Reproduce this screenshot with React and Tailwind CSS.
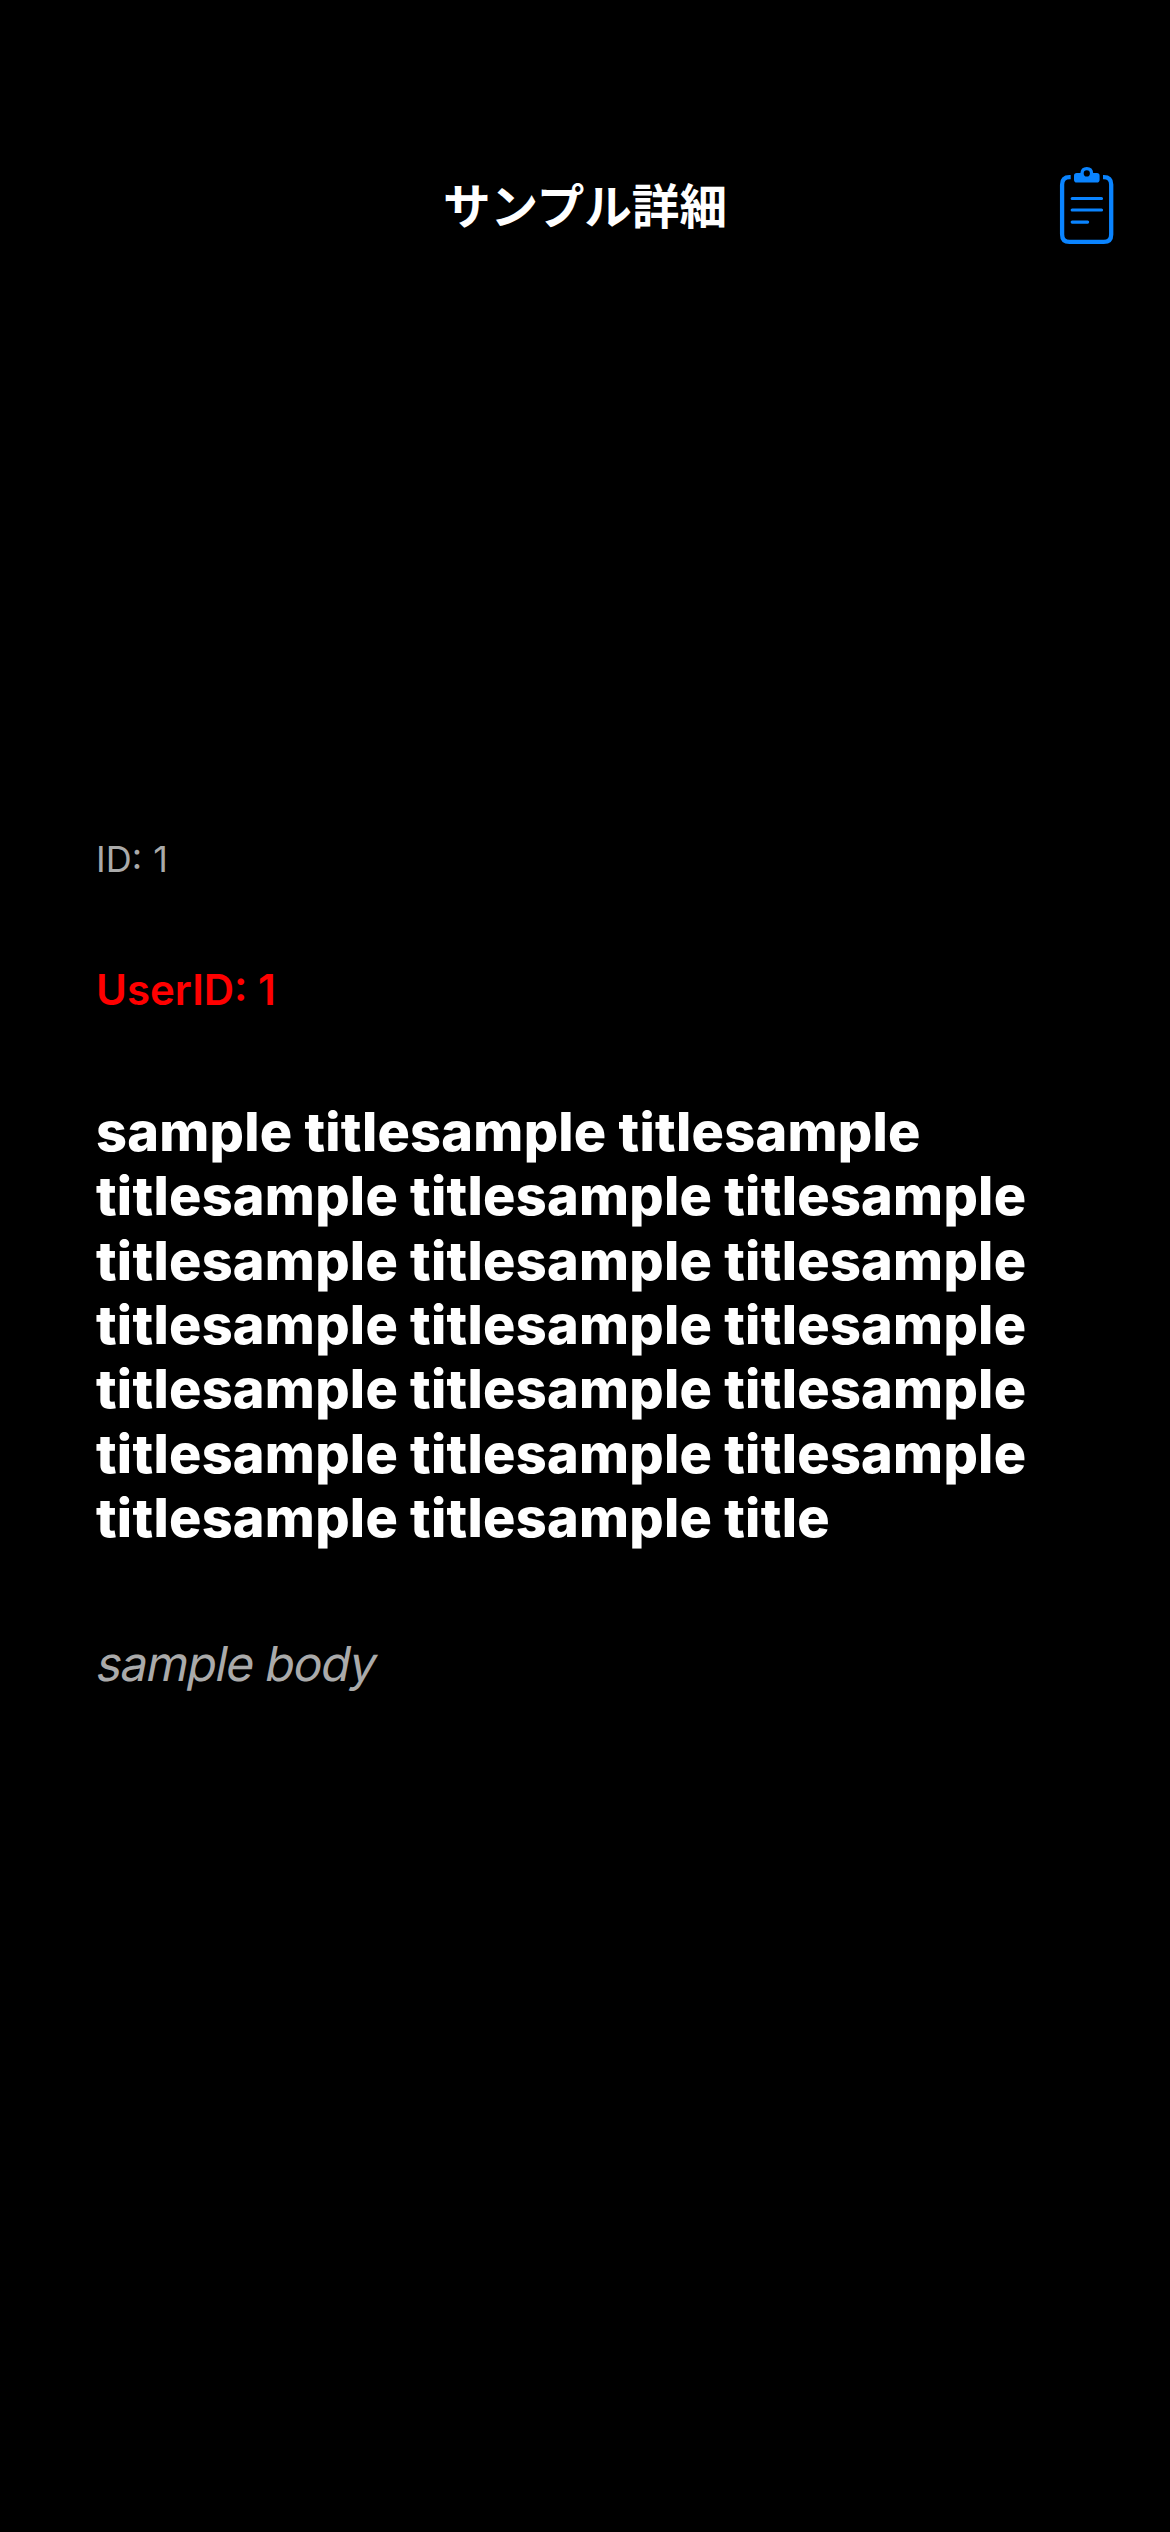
function ClipboardIcon() {
  return (
    <svg className="h-[110px] w-[100px]" viewBox="0 0 100 110" fill="none" stroke="#0a84ff">
      <path d="M30.7 27.2H29.5Q22.1 27.2 22.1 34.6V84.4Q22.1 91.8 29.5 91.8H63.8Q71.2 91.8 71.2 84.4V34.6Q71.2 27.2 63.8 27.2H63" strokeWidth="4.3" />
      <path d="M32.2 48.5H61.5M32.2 60H61.5M32.2 72.1H47.6" strokeWidth="3.2" strokeLinecap="round" />
      <path fill="#0a84ff" stroke="none" fillRule="evenodd" d="M36.8 23H40.4Q40.7 17 46.8 17Q52.9 17 53.2 23H56.8Q59.6 23 59.6 25.8V29.8Q59.6 32.6 56.8 32.6H36.8Q34 32.6 34 29.8V25.8Q34 23 36.8 23ZM46.8 20.3A3.1 3.1 0 1 0 46.8 26.5A3.1 3.1 0 1 0 46.8 20.3Z" />
    </svg>
  );
}

const TITLE_LINES = [
  "sample titlesample titlesample",
  ...Array(5).fill("titlesample titlesample titlesample"),
  "titlesample titlesample title",
];

export default function App() {
  return (
    <div className="h-[2532px] w-[1170px] overflow-hidden bg-black pt-[141px] font-['Inter','Noto_Sans_CJK_JP',sans-serif] text-white">
      <header className="grid h-[132px] grid-cols-[1fr_auto_1fr] items-center pb-[6px]">
        <span />
        <h1 className="whitespace-nowrap font-['Noto_Sans_CJK_JP',sans-serif] text-[47.6px] leading-[70px] font-bold">サンプル詳細</h1>
        <button type="button" aria-label="Clipboard" className="mr-[30px] mt-[2px] justify-self-end">
          <ClipboardIcon />
        </button>
      </header>
      <main className="flex flex-col items-start pt-[562px] pl-[96px]">
        <p className="text-[36px] leading-[48px] [word-spacing:1px] text-[#aaa]">ID: 1</p>
        <p className="mt-[80px] text-[42px] leading-[54px] font-semibold text-[#f00]">UserID: 1</p>
        <p className="mt-[83px] text-[54px] leading-[64.33px] font-extrabold tracking-[0.24px] whitespace-nowrap">
          {TITLE_LINES.map((line, i) => (
            <span key={i} className="block">{line}</span>
          ))}
        </p>
        <p className="mt-[84px] -ml-[2px] origin-[0_48px] -skew-x-[11deg] text-[48px] leading-[60px] tracking-[-1.15px] text-[#aaa]">sample body</p>
      </main>
    </div>
  );
}
